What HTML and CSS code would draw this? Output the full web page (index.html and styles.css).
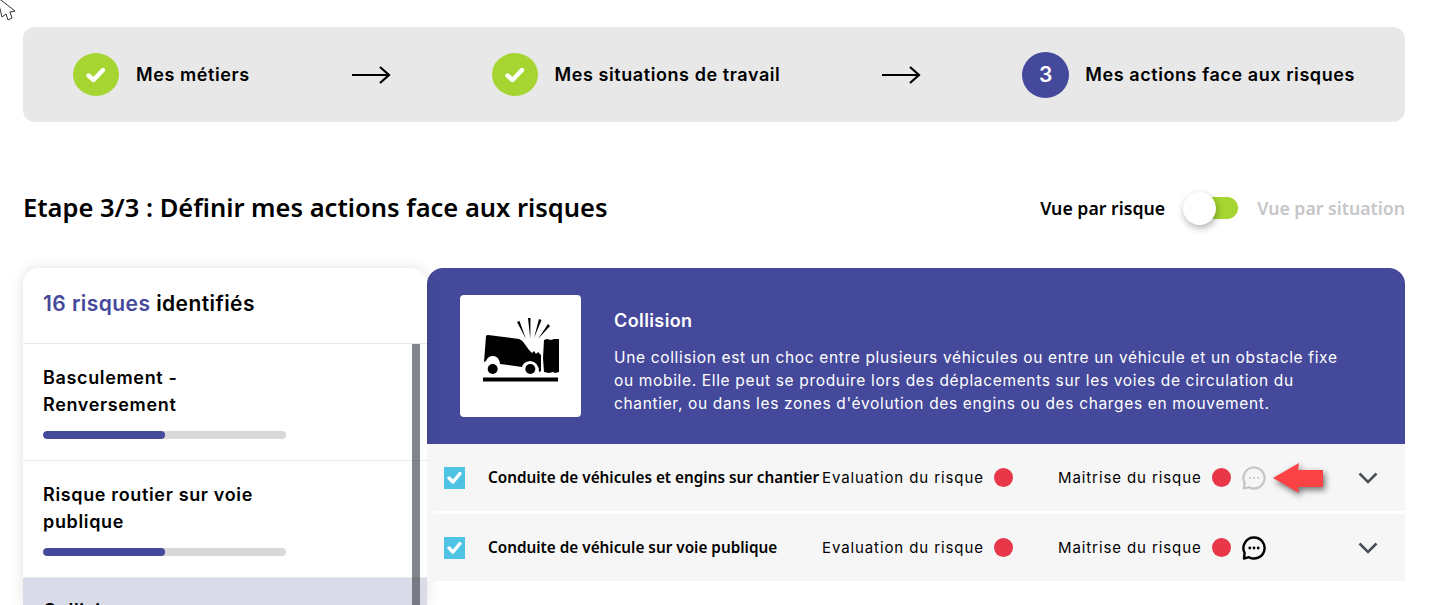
FILE: index.html
```html
<!DOCTYPE html>
<html lang="fr">
<head>
<meta charset="utf-8">
<title>Etape 3/3</title>
<link rel="stylesheet" href="styles.css">
</head>
<body>
<svg class="cursor" width="16" height="22" viewBox="0 0 16 22"><path d="M-3 -3 L15 11 L10 12 L12 18 L8 20 L6 14 L2 17 Z" fill="#fff" stroke="#333" stroke-width="1"/></svg>
<main class="page">
  <nav class="stepper">
    <div class="step">
      <span class="bullet done"><svg width="22" height="18" viewBox="0 0 22 18"><path d="M3.5 9.5 L8.5 14 L18 4" fill="none" stroke="#fff" stroke-width="4.4" stroke-linecap="round" stroke-linejoin="round"/></svg></span>
      <span class="step-label">Mes métiers</span>
    </div>
    <svg class="arrow" width="40" height="20" viewBox="0 0 40 20"><path d="M1 10 H38 M29 2 L38 10 L29 18" fill="none" stroke="#000" stroke-width="2.2"/></svg>
    <div class="step">
      <span class="bullet done"><svg width="22" height="18" viewBox="0 0 22 18"><path d="M3.5 9.5 L8.5 14 L18 4" fill="none" stroke="#fff" stroke-width="4.4" stroke-linecap="round" stroke-linejoin="round"/></svg></span>
      <span class="step-label">Mes situations de travail</span>
    </div>
    <svg class="arrow" width="40" height="20" viewBox="0 0 40 20"><path d="M1 10 H38 M29 2 L38 10 L29 18" fill="none" stroke="#000" stroke-width="2.2"/></svg>
    <div class="step">
      <span class="bullet current">3</span>
      <span class="step-label">Mes actions face aux risques</span>
    </div>
  </nav>

  <header class="title-row">
    <h1 class="title">Etape 3/3 : Définir mes actions face aux risques</h1>
    <div class="view-switch">
      <span class="view-on">Vue par risque</span>
      <span class="toggle"><span class="knob"></span></span>
      <span class="view-off">Vue par situation</span>
    </div>
  </header>

  <section class="panels">
    <aside class="risks">
      <h2 class="risks-head"><span class="accent">16 risques</span> identifiés</h2>
      <div class="risk-list">
        <div class="risk">
          <div class="risk-name">Basculement -<br>Renversement</div>
          <div class="bar"><div class="bar-fill"></div></div>
        </div>
        <div class="risk">
          <div class="risk-name">Risque routier sur voie<br>publique</div>
          <div class="bar"><div class="bar-fill"></div></div>
        </div>
        <div class="risk selected">
          <div class="risk-name">Collision</div>
        </div>
        <div class="scrollbar"></div>
      </div>
    </aside>

    <div class="detail">
      <div class="detail-head">
        <div class="pictogram">
          <svg width="76" height="64" viewBox="0 0 76 64">
            <path d="M3 18 Q3.5 17 5 17 L36 21 Q39 22 41 25 L46 32 L49 35 L51 33 L53 36 L55 34 L58 37 L58 53 L56 54 Q56 44 47 43 Q40 44 39 49 L17 46 Q16 38 10 38 Q5 38 3 43 L1 44 Z" fill="#000"/>
            <circle cx="9.7" cy="51" r="5" fill="#000"/>
            <circle cx="47.3" cy="51" r="5" fill="#000"/>
            <path d="M61 22 L64 21 L68 22 L71 21 L76 21 L76 54 L72 55 L70 54 L66 55 L61 54 L60 40 Z" fill="#000"/>
            <rect x="0" y="59.5" width="75" height="4" fill="#000"/>
            <path d="M34 4 L36.5 3 L43 21 Z M45 0 L47.5 0 L47.3 21 Z M56 1 L58.5 2 L51 20 Z M65 6 L67 8 L55 21 Z" fill="#000"/>
          </svg>
        </div>
        <div class="detail-text">
          <h3 class="detail-title">Collision</h3>
          <p class="detail-desc">Une collision est un choc entre plusieurs véhicules ou entre un véhicule et un obstacle fixe ou mobile. Elle peut se produire lors des déplacements sur les voies de circulation du chantier, ou dans les zones d'évolution des engins ou des charges en mouvement.</p>
        </div>
      </div>

      <div class="row">
        <span class="check"><svg width="21" height="21" viewBox="0 0 21 21"><path d="M5 11 L9 15 L16 6.5" fill="none" stroke="#fff" stroke-width="3.4" stroke-linecap="round" stroke-linejoin="round"/></svg></span>
        <span class="row-name">Conduite de véhicules et engins sur chantier</span>
        <span class="metric metric-eval">Evaluation du risque<i class="dot"></i></span>
        <span class="metric metric-mait">Maitrise du risque<i class="dot"></i></span>
        <svg class="chat muted" width="26" height="26" viewBox="0 0 26 26"><path d="M13 2.5 A10.5 10.5 0 1 1 8 22.2 L3 23.5 L3.6 17.8 A10.5 10.5 0 0 1 13 2.5 Z" fill="none" stroke="currentColor" stroke-width="2.2" stroke-linejoin="round"/><circle cx="8.8" cy="13" r="1.1" fill="currentColor"/><circle cx="13" cy="13" r="1.1" fill="currentColor"/><circle cx="17.2" cy="13" r="1.1" fill="currentColor"/></svg>
        <svg class="chev" width="20" height="12" viewBox="0 0 20 12"><path d="M1.5 1.5 L10 10 L18.5 1.5" fill="none" stroke="#4b4f57" stroke-width="2.6"/></svg>
        <svg class="red-arrow" width="56" height="38" viewBox="0 0 56 38"><path d="M1 16 L27 1 L26 8 L51 8 L51 25 L26 25 L27 31 Z" fill="#fb4245"/></svg>
      </div>
      <div class="row">
        <span class="check"><svg width="21" height="21" viewBox="0 0 21 21"><path d="M5 11 L9 15 L16 6.5" fill="none" stroke="#fff" stroke-width="3.4" stroke-linecap="round" stroke-linejoin="round"/></svg></span>
        <span class="row-name">Conduite de véhicule sur voie publique</span>
        <span class="metric metric-eval">Evaluation du risque<i class="dot"></i></span>
        <span class="metric metric-mait">Maitrise du risque<i class="dot"></i></span>
        <svg class="chat" width="26" height="26" viewBox="0 0 26 26"><path d="M13 2.5 A10.5 10.5 0 1 1 8 22.2 L3 23.5 L3.6 17.8 A10.5 10.5 0 0 1 13 2.5 Z" fill="none" stroke="currentColor" stroke-width="2.4" stroke-linejoin="round"/><circle cx="8.8" cy="13" r="1.4" fill="currentColor"/><circle cx="13" cy="13" r="1.4" fill="currentColor"/><circle cx="17.2" cy="13" r="1.4" fill="currentColor"/></svg>
        <svg class="chev" width="20" height="12" viewBox="0 0 20 12"><path d="M1.5 1.5 L10 10 L18.5 1.5" fill="none" stroke="#4b4f57" stroke-width="2.6"/></svg>
      </div>
    </div>
  </section>
</main>
</body>
</html>
```
FILE: styles.css
```css
* { box-sizing: border-box; }
html, body { margin: 0; height: 605px; overflow: hidden; background: #fff; }
body { font-family: "Noto Sans", "Liberation Sans", sans-serif; color: #000; }
.cursor { position: absolute; left: 0; top: 0; }
.page { padding: 27px 32px 0 23px; }

.stepper { height: 95px; background: #e8e8e8; border-radius: 12px; display: flex; align-items: center; justify-content: space-between; padding: 0 50px; }
.step { display: flex; align-items: center; gap: 17px; }
.bullet { width: 46px; height: 43px; border-radius: 50%; display: flex; align-items: center; justify-content: center; font-family: "Inter", sans-serif; font-size: 21px; font-weight: 600; color: #fff; }
.bullet.done { background: #a6d531; }
.bullet.current { background: #45499b; width: 47px; height: 46px; margin-right: -1px; }
.step-label { font-family: "Inter", sans-serif; font-size: 18px; font-weight: 600; letter-spacing: .58px; white-space: nowrap; }
.arrow { display: block; }

.title-row { display: flex; align-items: center; justify-content: space-between; height: 146px; padding-top: 26px; }
.title { margin: -2px 0 0; font-size: 25.5px; font-weight: 600; line-height: 32px; }
.view-switch { display: flex; align-items: center; font-size: 17.7px; font-weight: 600; }
.view-on { margin-right: 18px; }
.view-off { color: #c6c6c8; margin-left: 19px; }
.toggle { position: relative; width: 55px; height: 22px; display: block; }
.toggle::before { content: ""; position: absolute; left: 17px; right: 0; top: 0; bottom: 0; background: #a6d531; border-radius: 11px; }
.knob { position: absolute; left: 0; top: -5px; width: 33px; height: 33px; border-radius: 50%; background: #fff; box-shadow: 1px 3px 7px rgba(0,0,0,.3); }

.panels { display: flex; align-items: flex-start; }
.risks { width: 404px; height: 337px; background: #fff; border-radius: 16px 16px 0 0; box-shadow: 0 0 14px rgba(0,0,0,.12); overflow: hidden; flex: none; position: relative; }
.risks-head { margin: 0; height: 76px; padding: 20px; font-family: "Inter", sans-serif; font-size: 21px; font-weight: 600; line-height: 32px; letter-spacing: .43px; border-bottom: 1px solid #e8e8e8; }
.accent { color: #45499b; }
.risk-list { position: relative; }
.risk { height: 117px; padding: 20px 20px 0; border-bottom: 1px solid #e8e8e8; }
.risk-name { font-family: "Inter", sans-serif; font-size: 18px; font-weight: 600; line-height: 27px; letter-spacing: .65px; }
.bar { margin-top: 13px; width: 243px; height: 8px; background: #d8d8d8; border-radius: 4px; overflow: hidden; }
.bar-fill { width: 50%; height: 100%; background: #45499b; border-radius: 4px; }
.risk.selected { background: #d9dbe9; padding-top: 19px; }
.scrollbar { position: absolute; left: 389px; top: 0; width: 8px; height: 270px; background: rgba(80,84,90,.72); }

.detail { flex: 1; min-width: 0; }
.detail-head { height: 176px; background: #45499b; border-radius: 16px 16px 0 0; color: #fff; display: flex; padding: 27px 33px; gap: 33px; }
.pictogram { width: 121px; height: 122px; flex: none; background: #fff; border-radius: 4px; display: flex; align-items: center; justify-content: center; padding-bottom: 12px; }
.detail-text { width: 735px; }
.detail-title { margin: 14px 0 13px; font-family: "Inter", sans-serif; font-size: 18px; font-weight: 600; line-height: 24px; letter-spacing: .4px; }
.detail-desc { margin: 0; font-family: "Inter", sans-serif; font-size: 15.5px; line-height: 23px; letter-spacing: .66px; }

.row { position: relative; height: 67px; background: #f6f6f6; margin-bottom: 3px; display: flex; align-items: center; padding-left: 17px; }
.check { width: 21px; height: 22px; background: #4fc3e3; flex: none; margin-right: 23px; display: block; }
.check svg { display: block; }
.row-name { width: 334px; flex: none; font-size: 15.3px; font-weight: 600; white-space: nowrap; margin-top: -2px; }
.metric { font-family: "Inter", sans-serif; font-size: 15px; display: flex; align-items: center; flex: none; letter-spacing: .9px; }
.metric-eval { width: 236px; }
.metric-mait { width: 184px; }
.dot { width: 19px; height: 19px; border-radius: 50%; background: #e73748; margin-left: 10px; display: block; }
.chat { flex: none; color: #000; display: block; margin-right: 91px; margin-left: -1px; }
.chat.muted { color: #c4c4c4; }
.chev { flex: none; display: block; }
.red-arrow { position: absolute; left: 845px; top: 18px; filter: drop-shadow(2px 3px 3px rgba(0,0,0,.55)); }
```
